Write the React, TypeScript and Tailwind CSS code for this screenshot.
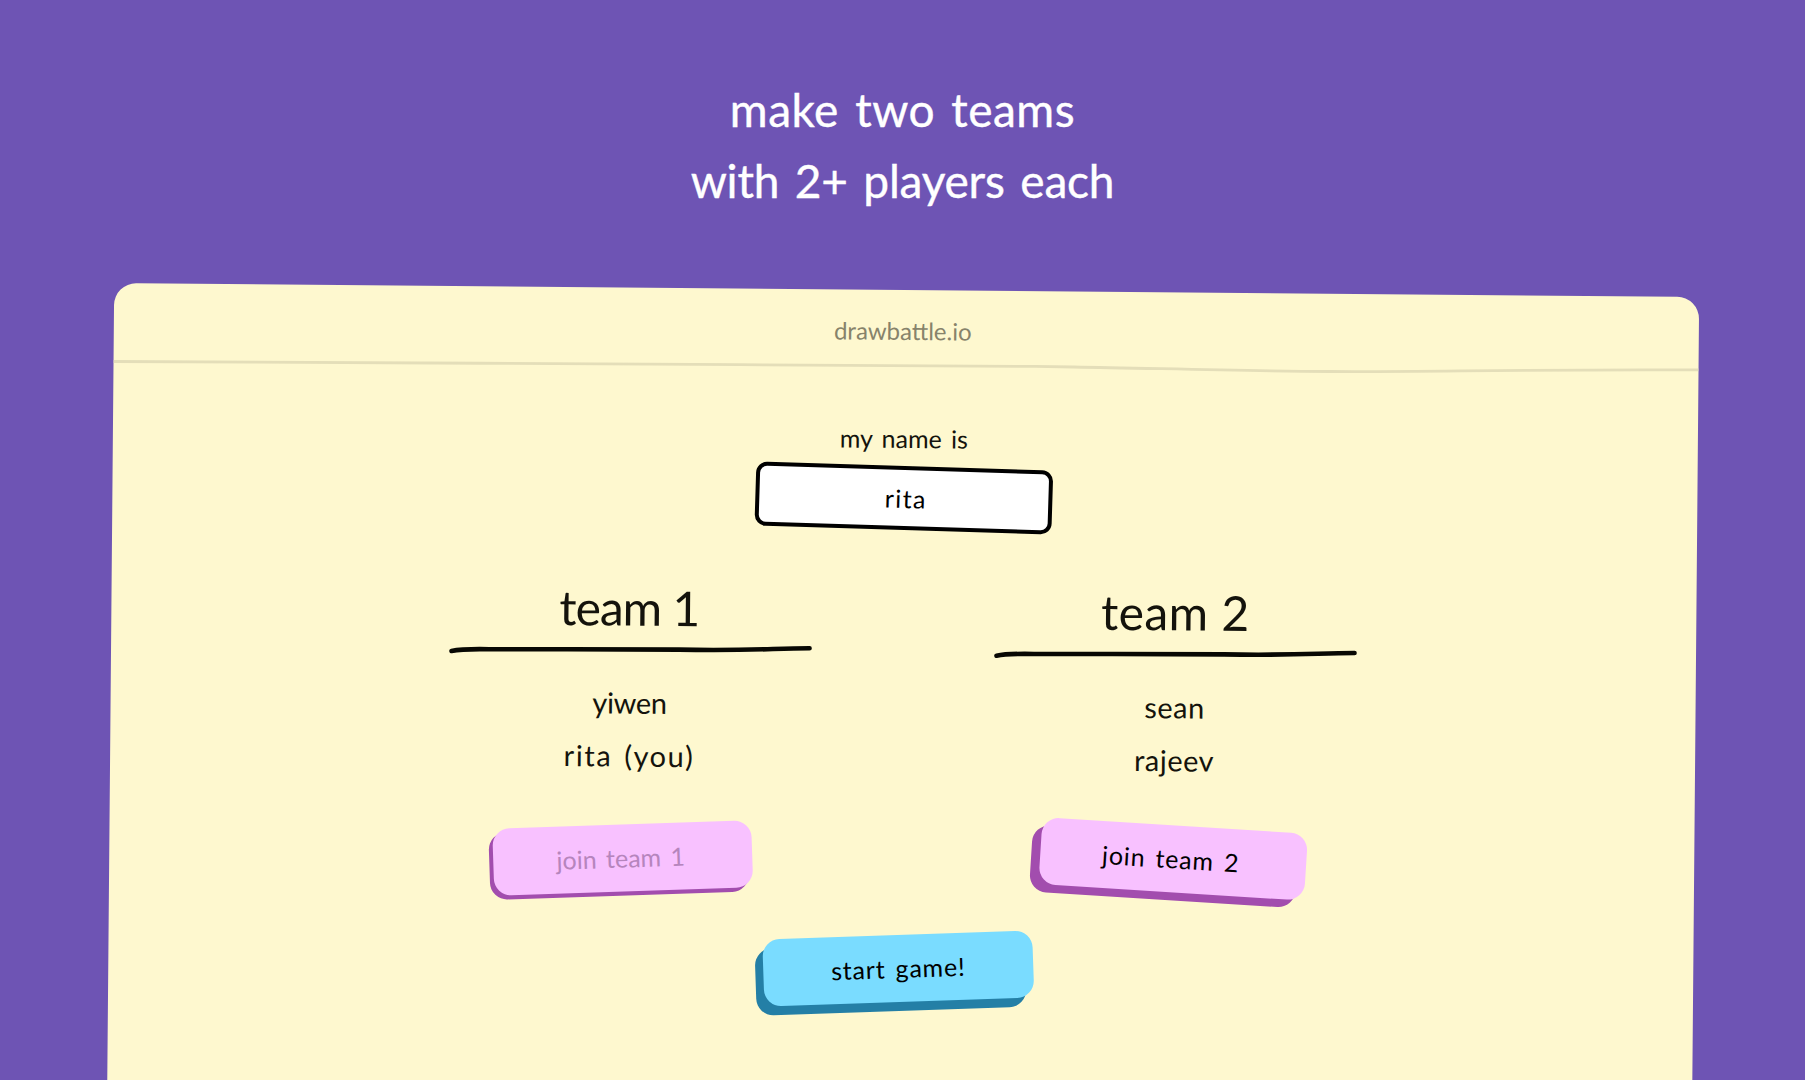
import React, { useState } from "react"

const teams = [
	{ id: 1, name: "team 1", players: ["yiwen", "rita (you)"] },
	{ id: 2, name: "team 2", players: ["sean", "rajeev"] },
]

const playerStyles: Record<string, string> = {
	yiwen: "tracking-[-0.3px]",
	"rita (you)": "tracking-[1.6px] [word-spacing:3px]",
	sean: "tracking-[0.5px]",
	rajeev: "tracking-[0.5px]",
}

// wobbly line under the address bar
function HeaderLine() {
	return (
		<svg viewBox="0 0 1585 12" className="block w-full h-3" fill="none">
			<path
				d="M0 8.4 C200 7.4 420 6.8 626 6.1 S880 4.9 960 5.5 S1120 7.9 1216 7.8 S1400 3.8 1585 3"
				stroke="#e4deb9"
				strokeWidth="2.8"
			/>
		</svg>
	)
}

// hand drawn underline of the team name
function Underline() {
	return (
		<svg viewBox="0 0 364 16" className="block w-[364px] h-4 mt-[4px]" fill="none">
			<path
				d="M2.5 10.9 C12 8.8 22 8.6 40 8.8 C100 8.4 180 7.6 230 7.6 C300 8.2 320 5.8 360.5 5.1"
				stroke="#080803"
				strokeWidth="4.6"
				strokeLinecap="round"
			/>
		</svg>
	)
}

function App() {
	const [name, setName] = useState("rita")
	const [myTeam, setMyTeam] = useState(1)

	return (
		<div className="h-screen overflow-hidden bg-[#6e54b4] font-['Lato','Open_Sans',sans-serif] flex flex-col items-center">
			<h1 className="pt-[74px] text-[46px] leading-[71px] text-white text-center [word-spacing:4px] [-webkit-text-stroke:0.4px_white]">
				<span className="block tracking-[0.5px]">make two teams</span>
				<span className="block tracking-[-0.2px]">with 2+ players each</span>
			</h1>

			{/* Game window */}
			<div className="mt-[74px] w-[1585px] h-[960px] shrink-0 rounded-[22px] bg-[#fef8cf] rotate-[0.5deg] flex flex-col items-center text-[#14130c]">
				<div className="h-[70px] pr-[7px] leading-[81px] text-[24px] text-[#87836b]">drawbattle.io</div>
				<HeaderLine />

				{/* Name */}
				<label htmlFor="name" className="mt-[50px] mr-[3px] text-[25px] leading-8 [word-spacing:3px]">
					my name is
				</label>
				<input
					id="name"
					value={name}
					onChange={(e) => setName(e.target.value)}
					className="mt-[12px] mr-[3px] w-[297px] h-[64px] rounded-[11px] border-[4.5px] border-black bg-white text-center text-[25px] tracking-[1.4px] pl-1 pr-0 pb-0 text-black rotate-[1.25deg] outline-none"
				/>

				{/* Teams */}
				<div className="mt-[50px] flex">
					{teams.map((team) => (
						<div key={team.id} className="w-[545px] flex flex-col items-center">
							<h2
								className={`text-[48px] leading-[60px] ${
									team.id === 1 ? "tracking-[-1px] mr-[4px]" : "tracking-[0.4px] mr-[2px]"
								}`}
							>
								{team.name}
							</h2>
							<Underline />
							<ul className="mt-[18px] mr-[2px] text-center text-[29px] leading-[53px]">
								{team.players.map((player) => (
									<li key={player} className={playerStyles[player]}>
										{player}
									</li>
								))}
							</ul>
							<button
								onClick={() => setMyTeam(team.id)}
								className={`h-[67px] rounded-[17px] bg-[#f8c1ff] text-[25px] [word-spacing:3px] ${
									team.id === 1
										? "mt-[43px] mr-[14px] w-[259px] rotate-[-2.4deg] tracking-[0px] pr-[4px]"
										: "mt-[39px] mr-[3px] w-[266px] rotate-[3.1deg] tracking-[0.8px] pr-[5px]"
								} ${
									myTeam === team.id
										? "shadow-[-4px_4px_0_#a24dae] text-[#b685bd]"
										: "shadow-[-9px_8px_0_#a24dae] text-black"
								}`}
							>
								join team {team.id}
							</button>
						</div>
					))}
				</div>

				<button className="mt-[41px] mr-[5px] w-[270px] h-[67px] rounded-[17px] bg-[#7adcff] shadow-[-8px_9px_0_#247fa6] text-[25px] tracking-[0.8px] [word-spacing:3px] text-black rotate-[-2.45deg]">
					start game!
				</button>
			</div>
		</div>
	)
}

export default App
